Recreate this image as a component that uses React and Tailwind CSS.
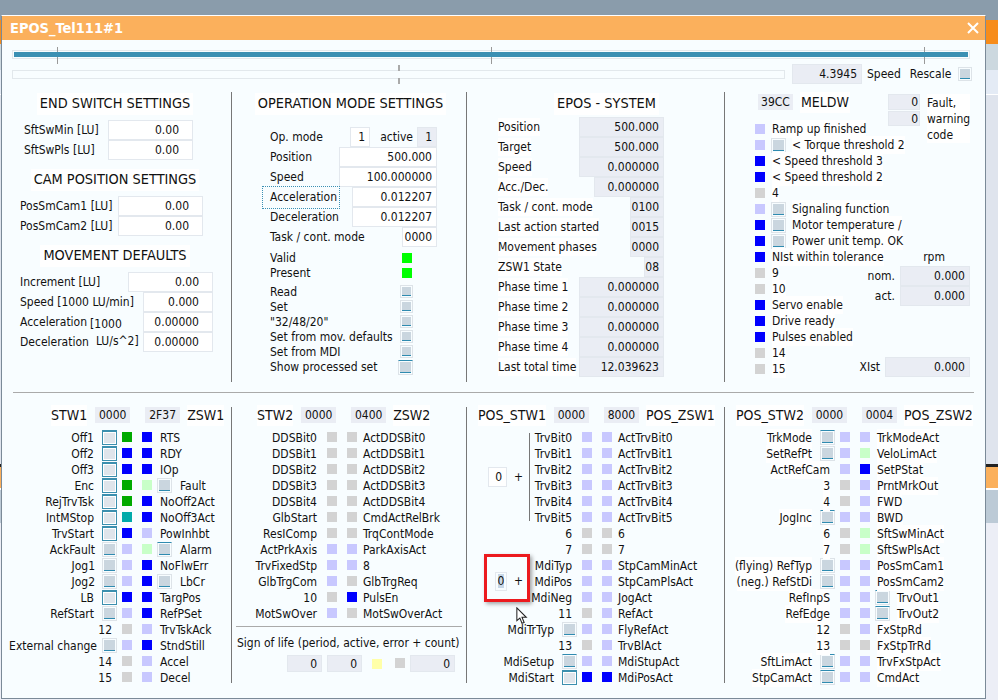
import React from 'react';

const C = {
  b: 'bg-[#0000ff]',
  l: 'bg-[#c8c8ff]',
  g: 'bg-[#d3d3d3]',
  G: 'bg-[#00aa00]',
  T: 'bg-[#00aaaa]',
  L: 'bg-[#c8ffc8]',
  y: 'bg-[#ffffa8]',
};

function Ind({ c, className = '' }) {
  return <div className={`w-[10px] h-[10px] shrink-0 ${C[c]} ${className}`} />;
}

// kind: 'off' | 'top' | 'on'
function Check({ kind = 'off', className = 'w-[15px] h-[15px]' }) {
  if (kind === 'on') {
    return (
      <div className={`shrink-0 border border-t-2 border-[#3b8fae] bg-white p-px ${className}`}>
        <div className="h-full bg-[#dfe5eb]" />
      </div>
    );
  }
  return (
    <div className={`shrink-0 border border-[#dde3e8] p-px ${kind === 'top' ? 'border-t-[#2f8bb0]' : ''} ${className}`}>
      <div className="h-full bg-[#cad6df] border-b border-[#2f8bb0]" />
    </div>
  );
}

function Box({ v, w, gray, pr = 'pr-[4px]', h = 'h-5', className = '' }) {
  return (
    <div className={`${w} ${h} ${pr} shrink-0 border border-[#e3e8ee] flex items-center justify-end ${gray ? 'bg-[#eaedf4]' : 'bg-white'} ${className}`}>
      {v}
    </div>
  );
}

function Hex({ v }) {
  return <div className="w-[35px] h-4 shrink-0 bg-[#eaedf4] flex items-center justify-center">{v}</div>;
}

function Heading({ children, className = '' }) {
  return (
    <div className={`h-[22px] flex items-center justify-center text-[14.4px] ${className}`}>
      <span className="bg-white px-[3px] translate-y-px">{children}</span>
    </div>
  );
}

function Row({ label, children, className = '', labelClass = '' }) {
  return (
    <div className={`h-5 flex items-center ${className}`}>
      <span className={labelClass}>{label}</span>
      {children}
    </div>
  );
}

// row: left label, left check, two lamps, right label, right check, extra classes for the left label
function BitRow({ row, slot, gap = 'ml-[8px]', paper = '' }) {
  const [left, check, a, b, right, rightCheck, tweak] = row;
  return (
    <div className="h-4 flex items-center whitespace-nowrap">
      <div className={`${slot} shrink-0 flex items-center justify-end`}>
        <span className={tweak || (check ? 'mr-[8px]' : 'mr-[5px]')}>
          <span className={`block translate-y-px ${paper}`}>{left}</span>
        </span>
        {check && <Check kind={check} />}
      </div>
      <Ind c={a} className="ml-[5px]" />
      <Ind c={b} className="ml-[10px]" />
      {rightCheck && <Check kind={rightCheck} className="w-[15px] h-[15px] ml-[5px]" />}
      <span className={`${gap} translate-y-px ${paper}`}>{right}</span>
    </div>
  );
}

const stw1 = [
  ['Off1', 'on', 'G', 'b', 'RTS'],
  ['Off2', 'on', 'b', 'b', 'RDY'],
  ['Off3', 'on', 'b', 'b', 'IOp'],
  ['Enc', 'on', 'G', 'L', 'Fault', 'off'],
  ['RejTrvTsk', 'on', 'G', 'b', 'NoOff2Act'],
  ['IntMStop', 'on', 'T', 'b', 'NoOff3Act'],
  ['TrvStart', 'on', 'b', 'l', 'PowInhbt'],
  ['AckFault', 'off', 'l', 'L', 'Alarm', 'top', 'mr-[7px]'],
  ['Jog1', 'off', 'l', 'b', 'NoFlwErr', null, 'mr-[7px]'],
  ['Jog2', 'off', 'l', 'b', 'LbCr', 'off', 'mr-[7px]'],
  ['LB', 'on', 'b', 'b', 'TargPos'],
  ['RefStart', 'off', 'l', 'b', 'RefPSet'],
  ['12', null, 'g', 'l', 'TrvTskAck'],
  ['External change', 'off', 'l', 'b', 'StndStill', null, 'mr-[5px]'],
  ['14', null, 'g', 'l', 'Accel'],
  ['15', null, 'g', 'l', 'Decel'],
];

const stw2 = [
  ['DDSBit0', null, 'g', 'g', 'ActDDSBit0'],
  ['DDSBit1', null, 'g', 'g', 'ActDDSBit1'],
  ['DDSBit2', null, 'g', 'g', 'ActDDSBit2'],
  ['DDSBit3', null, 'g', 'g', 'ActDDSBit3'],
  ['DDSBit4', null, 'g', 'g', 'ActDDSBit4'],
  ['GlbStart', null, 'g', 'g', 'CmdActRelBrk'],
  ['ResIComp', null, 'g', 'g', 'TrqContMode'],
  ['ActPrkAxis', null, 'l', 'l', 'ParkAxisAct'],
  ['TrvFixedStp', null, 'l', 'l', '8'],
  ['GlbTrgCom', null, 'l', 'g', 'GlbTrgReq'],
  ['10', null, 'g', 'b', 'PulsEn'],
  ['MotSwOver', null, 'l', 'g', 'MotSwOverAct'],
];

const posTrv = [0, 1, 2, 3, 4, 5].map((i) => [`TrvBit${i}`, null, 'l', 'l', `ActTrvBit${i}`]);
const posMdi = [
  ['MdiTyp', null, 'l', 'l', 'StpCamMinAct'],
  ['MdiPos', null, 'l', 'l', 'StpCamPlsAct'],
  ['MdiNeg', null, 'l', 'l', 'JogAct'],
];
const posEnd = [
  ['11', null, 'g', 'l', 'RefAct'],
  ['MdiTrTyp', 'off', 'l', 'l', 'FlyRefAct'],
  ['13', null, 'g', 'l', 'TrvBlAct'],
  ['MdiSetup', 'top', 'l', 'l', 'MdiStupAct'],
  ['MdiStart', 'on', 'b', 'b', 'MdiPosAct'],
];

const posStw2 = [
  ['TrkMode', 'top', 'l', 'l', 'TrkModeAct'],
  ['SetRefPt', 'off', 'l', 'L', 'VeloLimAct'],
  ['ActRefCam', null, 'l', 'b', 'SetPStat'],
  ['3', null, 'g', 'l', 'PrntMrkOut'],
  ['4', null, 'g', 'l', 'FWD'],
  ['JogInc', 'top', 'l', 'l', 'BWD'],
  ['6', null, 'g', 'L', 'SftSwMinAct'],
  ['7', null, 'g', 'L', 'SftSwPlsAct'],
  ['(flying) RefTyp', 'off', 'l', 'l', 'PosSmCam1'],
  ['(neg.) RefStDi', 'off', 'l', 'l', 'PosSmCam2'],
  ['RefInpS', null, 'l', 'l', 'TrvOut1', 'top'],
  ['RefEdge', null, 'l', 'l', 'TrvOut2', 'top'],
  ['12', null, 'g', 'l', 'FxStpRd'],
  ['13', null, 'g', 'g', 'FxStpTrRd'],
  ['SftLimAct', 'top', 'l', 'l', 'TrvFxStpAct'],
  ['StpCamAct', 'top', 'l', 'l', 'CmdAct'],
];

const meldw = [
  ['l', 'Ramp up finished'],
  ['l', '< Torque threshold 2', true],
  ['b', '< Speed threshold 3'],
  ['b', '< Speed threshold 2'],
  ['g', '4'],
  ['l', 'Signaling function', true],
  ['b', 'Motor temperature /', true],
  ['b', 'Power unit temp. OK', true],
  ['b', 'NIst within tolerance'],
  ['g', '9'],
  ['g', '10'],
  ['b', 'Servo enable'],
  ['b', 'Drive ready'],
  ['b', 'Pulses enabled'],
  ['g', '14'],
  ['g', '15'],
];

const system = [
  ['Position', '500.000', 'w-[85px]'],
  ['Target', '500.000', 'w-[85px]'],
  ['Speed', '0.000000', 'w-[85px]'],
  ['Acc./Dec.', '0.000000', 'w-[70px]'],
  ['Task / cont. mode', '0100', 'w-[34px]'],
  ['Last action started', '0015', 'w-[34px]'],
  ['Movement phases', '0000', 'w-[34px]'],
  ['ZSW1 State', '08', 'w-[20px]'],
  ['Phase time 1', '0.000000', 'w-[85px]'],
  ['Phase time 2', '0.000000', 'w-[85px]'],
  ['Phase time 3', '0.000000', 'w-[85px]'],
  ['Phase time 4', '0.000000', 'w-[85px]'],
  ['Last total time', '12.039623', 'w-[85px]'],
];

const actions = ['Read', 'Set', '"32/48/20"', 'Set from mov. defaults', 'Set from MDI'];

function EndSwitchColumn() {
  return (
    <div className="w-[230px] shrink-0 border-r border-[#777] pr-[3px]">
      <Heading>END SWITCH SETTINGS</Heading>
      <div className="mt-[6px] ml-[22px] w-[169px]">
        <Row label="SftSwMin [LU]"><Box v="0.00" w="w-[85px]" pr="pr-[13px]" className="ml-auto" /></Row>
        <Row label="SftSwPls [LU]"><Box v="0.00" w="w-[85px]" pr="pr-[13px]" className="ml-auto" /></Row>
      </div>
      <Heading className="mt-[8px]">CAM POSITION SETTINGS</Heading>
      <div className="mt-[6px] ml-[18px] w-[183px]">
        <Row label="PosSmCam1 [LU]"><Box v="0.00" w="w-[85px]" pr="pr-[13px]" className="ml-auto" /></Row>
        <Row label="PosSmCam2 [LU]"><Box v="0.00" w="w-[85px]" pr="pr-[13px]" className="ml-auto" /></Row>
      </div>
      <Heading className="mt-[8px]">MOVEMENT DEFAULTS</Heading>
      <div className="mt-[6px] ml-[18px] w-[193px]">
        <Row label="Increment [LU]"><Box v="0.00" w="w-[85px]" pr="pr-[13px]" className="ml-auto" /></Row>
        <Row label="Speed [1000 LU/min]"><Box v="0.000" w="w-[70px]" pr="pr-[13px]" className="ml-auto" /></Row>
        <Row label="Acceleration">
          <span className="ml-[3px] mt-[4px]">[1000</span>
          <Box v="0.00000" w="w-[70px]" pr="pr-[13px]" className="ml-auto" />
        </Row>
        <Row label="Deceleration">
          <span className="ml-[7px] -mt-[2px]">LU/s^2]</span>
          <Box v="0.00000" w="w-[70px]" pr="pr-[13px]" className="ml-auto" />
        </Row>
      </div>
    </div>
  );
}

function OperationColumn() {
  return (
    <div className="w-[235px] shrink-0 border-r border-[#777]">
      <Heading className="pl-[3px]">OPERATION MODE SETTINGS</Heading>
      <div className="mt-[13px] ml-[38px] w-[167px]">
        <Row label="Op. mode">
          <Box v="1" w="w-[20px]" className="ml-auto" />
          <span className="ml-[10px]">active</span>
          <Box v="1" w="w-[20px]" gray className="ml-[4px]" />
        </Row>
        <Row label="Position"><Box v="500.000" w="w-[98px]" className="ml-auto" /></Row>
        <Row label="Speed"><Box v="100.000000" w="w-[98px]" className="ml-auto" /></Row>
        <div className="h-5 flex items-center">
          <span className="-ml-[8px] pl-[7px] w-[78px] h-[23px] shrink-0 flex items-center border border-dotted border-[#3b90b3]">Acceleration</span>
          <Box v="0.012207" w="w-[85px]" className="ml-auto" />
        </div>
        <Row label="Deceleration"><Box v="0.012207" w="w-[85px]" className="ml-auto" /></Row>
        <Row label="Task / cont. mode"><Box v="0000" w="w-[35px]" className="ml-auto" /></Row>
      </div>
      <div className="mt-[3px] ml-[38px] w-[143px]">
        <div className="h-[15px] flex items-center justify-between pr-px"><span>Valid</span><div className="w-[10px] h-[10px] bg-[#00ff00]" /></div>
        <div className="h-[15px] flex items-center justify-between pr-px"><span>Present</span><div className="w-[10px] h-[10px] bg-[#00ff00]" /></div>
        <div className="h-[4px]" />
        {actions.map((a) => (
          <div key={a} className="h-[15px] flex items-center justify-between whitespace-nowrap">
            <span>{a}</span>
            <Check className="w-[13px] h-[13px]" />
          </div>
        ))}
        <div className="h-[16px] flex items-center justify-between whitespace-nowrap">
          <span>Show processed set</span>
          <Check kind="top" />
        </div>
      </div>
    </div>
  );
}

function SystemColumn() {
  return (
    <div className="w-[258px] shrink-0 border-r border-[#777]">
      <Heading className="pl-[22px]">EPOS - SYSTEM</Heading>
      <div className="mt-[3px] ml-[31px] w-[166px]">
        {system.map(([label, v, w]) => (
          <Row key={label} label={label} labelClass="bg-white"><Box v={v} w={w} gray className="ml-auto" /></Row>
        ))}
      </div>
    </div>
  );
}

function MeldwColumn() {
  return (
    <div className="flex-1 flex pl-[30px] pt-[2px]">
      <div className="w-[100px] shrink-0 whitespace-nowrap">
        <div className="h-4 flex items-center pl-[3px]">
          <Hex v="39CC" />
          <span className="ml-[7px] text-[14px] bg-white px-px">MELDW</span>
        </div>
        <div className="mt-[11px]">
          {meldw.map(([c, label, check], i) => (
            <div key={i} className="h-4 flex items-center">
              <Ind c={c} />
              {check ? (
                <>
                  <Check className="w-[15px] h-[15px] ml-[6px]" />
                  <span className="ml-[6px] bg-white">{label}</span>
                </>
              ) : (
                <span className="ml-[7px] bg-white">{label}</span>
              )}
            </div>
          ))}
        </div>
      </div>
      <div className="w-[115px] shrink-0 flex flex-col items-end">
        <div className="h-[48px] w-[115px] flex pl-[33px] whitespace-nowrap">
          <div className="flex flex-col gap-px">
            <Box v="0" w="w-[32px]" h="h-4" gray pr="pr-[1px]" />
            <Box v="0" w="w-[32px]" h="h-[15px]" gray pr="pr-[1px]" />
          </div>
          <div className="ml-[7px] pt-px leading-[16px] bg-white self-start">Fault,<br />warning<br />code</div>
        </div>
        <div className="mt-[107px] h-4 flex items-center pr-[25px]">rpm</div>
        <div className="mt-px flex items-center gap-[5px]"><span>nom.</span><Box v="0.000" w="w-[70px]" gray /></div>
        <div className="flex items-center gap-[5px]"><span>act.</span><Box v="0.000" w="w-[70px]" gray /></div>
        <div className="mt-[51px] flex items-center gap-[5px]"><span>XIst</span><Box v="0.000" w="w-[85px]" gray /></div>
      </div>
    </div>
  );
}

function BitHeader({ a, b, x, y, className = '' }) {
  return (
    <div className={`h-4 flex items-center text-[14px] whitespace-nowrap ${className}`}>
      <span className="bg-white">{a}</span>
      <div className="ml-[8px] text-[12px]"><Hex v={x} /></div>
      <div className="ml-[15px] text-[12px]"><Hex v={y} /></div>
      <span className="ml-[7px] bg-white">{b}</span>
    </div>
  );
}

function Stw1Column() {
  return (
    <div className="w-[230px] shrink-0 border-r border-[#777]">
      <BitHeader a="STW1" b="ZSW1" x="0000" y="2F37" className="pl-[49px]" />
      <div className="mt-[6px]">
        {stw1.map((r) => <BitRow key={r[0]} row={r} slot="w-[115px]" />)}
      </div>
    </div>
  );
}

function Stw2Column() {
  return (
    <div className="w-[235px] shrink-0 border-r border-[#777]">
      <BitHeader a="STW2" b="ZSW2" x="0000" y="0400" className="pl-[25px]" />
      <div className="mt-[6px]">
        {stw2.map((r) => <BitRow key={r[0]} row={r} slot="w-[90px]" gap="ml-[6px]" />)}
      </div>
      <div className="mt-[5px] mx-[4px] h-px bg-[#aaa]" />
      <div className="mt-[8px] pl-[5px] h-4 flex items-center whitespace-nowrap">Sign of life (period, active, error + count)</div>
      <div className="mt-[4px] flex items-center pl-[55px]">
        <Box v="0" w="w-[35px]" h="h-[17px]" gray />
        <Box v="0" w="w-[35px]" h="h-[17px]" gray className="ml-[5px]" />
        <Ind c="y" className="ml-[10px]" />
        <Ind c="g" className="ml-[13px] -mt-[2px]" />
        <Box v="0" w="w-[45px]" h="h-[17px]" gray className="ml-[5px]" />
      </div>
    </div>
  );
}

function PosStw1Column() {
  return (
    <div className="w-[258px] shrink-0 border-r border-[#777]">
      <BitHeader a="POS_STW1" b="POS_ZSW1" x="0000" y="8000" className="pl-[11px]" />
      <div className="mt-[6px]">
        <div className="flex">
          <div className="w-[63px] shrink-0 my-[4px] border-r border-[#777] flex items-center pl-[21px] gap-[7px]">
            <Box v="0" w="w-[19px]" pr="pr-[4px]" />
            <span>+</span>
          </div>
          <div>{posTrv.map((r) => <BitRow key={r[0]} row={r} slot="w-[47px]" gap="ml-[6px]" />)}</div>
        </div>
        <BitRow row={['6', null, 'g', 'g', '6']} slot="w-[110px]" gap="ml-[6px]" />
        <BitRow row={['7', null, 'g', 'g', '7']} slot="w-[110px]" gap="ml-[6px]" />
        <div className="flex relative">
          <div className="w-[63px] shrink-0 flex items-center pl-[28px] gap-[7px]">
            <div className="w-[12px] h-[19px] shrink-0 border border-[#e3e8ee] flex items-center justify-center">
              <span className="bg-[#c7d7e7] leading-[14px]">0</span>
            </div>
            <span>+</span>
          </div>
          <div>{posMdi.map((r) => <BitRow key={r[0]} row={r} slot="w-[47px]" gap="ml-[6px]" />)}</div>
          <div className="absolute left-[17px] -top-[3px] w-[46px] h-[48px] border-[3px] border-[#ec1a1e] shadow-[2px_2px_4px_rgba(0,0,0,0.35)]" />
          <svg className="absolute left-[49px] top-[50px]" width="12" height="18" viewBox="0 0 14 21">
            <path d="M1 1 L1 16 L4.5 13 L7 19 L9.5 18 L7 12 L12 12 Z" fill="#fff" stroke="#222" strokeWidth="1.2" />
          </svg>
        </div>
        {posEnd.map((r) => <BitRow key={r[0]} row={r} slot="w-[110px]" gap="ml-[6px]" />)}
      </div>
    </div>
  );
}

function PosStw2Column() {
  return (
    <div className="flex-1">
      <BitHeader a="POS_STW2" b="POS_ZSW2" x="0000" y="0004" className="pl-[11px]" />
      <div className="mt-[6px]">
        {posStw2.map((r, i) => <BitRow key={i} row={r} slot="w-[110px]" gap="ml-[7px]" paper="bg-white" />)}
      </div>
    </div>
  );
}

function Backdrop() {
  return (
    <div className="w-full h-full flex flex-col bg-[#eceef6]">
      <div className="h-[20px] bg-[#8a9cab]" />
      <div className="h-[24px] bg-[#f78c1a]" />
      <div className="h-[26px] bg-[#ccd8df]" />
      <div className="h-[24px] bg-[#e4ebf5]" />
      <div className="h-px bg-white" />
      <div className="h-[369px] bg-[#dfe4ed]" />
      <div className="h-[3px] bg-[#222]" />
      <div className="h-[21px] bg-[#fbb05c]" />
      <div className="h-[2px] bg-white" />
      <div className="h-[33px] bg-[#bccad6]" />
    </div>
  );
}

export default function App() {
  return (
    <div className="relative w-[998px] h-[700px] overflow-hidden text-[12px] text-[#111] font-['DejaVu_Sans_Condensed','DejaVu_Sans',sans-serif]">
      <Backdrop />
      <div className="absolute left-[1px] top-[15px] w-[985px] h-[684px] bg-[#f8fdff] border border-[#7b8a98] border-t-white flex flex-col">
        <div className="h-[24px] shrink-0 bg-[#fbb05c] flex items-center justify-between pl-[8px] pr-[6px] text-white text-[14.5px] font-bold">
          <span className="translate-y-px">EPOS_Tel111#1</span>
          <svg width="12" height="12" viewBox="0 0 12 12">
            <path d="M1 1 L11 11 M11 1 L1 11" stroke="#fff" strokeWidth="2" />
          </svg>
        </div>

        <div className="relative mt-[10px] ml-[10px] w-[958px] h-[9px] border border-[#e2e8ec] p-px">
          <div className="relative z-10 h-full bg-[#3b90b3]" />
          <div className="absolute left-[44px] -top-[4px] w-px h-[17px] bg-[#999]" />
          <div className="absolute left-[478px] -top-[4px] w-px h-[17px] bg-[#999]" />
          <div className="absolute left-[911px] -top-[4px] w-px h-[17px] bg-[#999]" />
        </div>

        <div className="mt-[5px] h-5 flex items-center pl-[10px]">
          <div className="relative w-[773px] h-[9px] border border-[#e2e8ec]">
            <div className="absolute left-[385px] -top-[6px] w-[2px] h-[6px] bg-[#aaa]" />
            <div className="absolute left-[385px] top-[7px] w-[2px] h-[6px] bg-[#aaa]" />
          </div>
          <Box v="4.3945" w="w-[70px]" gray className="ml-[7px]" />
          <span className="ml-[5px]">Speed</span>
          <span className="ml-[9px]">Rescale</span>
          <Check className="w-[14px] h-[14px] ml-[7px]" />
        </div>

        <div className="mt-[8px] h-[290px] shrink-0 flex">
          <EndSwitchColumn />
          <OperationColumn />
          <SystemColumn />
          <MeldwColumn />
        </div>

        <div className="mt-[10px] mx-[11px] h-px shrink-0 bg-[#aaa]" />

        <div className="mt-[14px] h-[276px] shrink-0 flex">
          <Stw1Column />
          <Stw2Column />
          <PosStw1Column />
          <PosStw2Column />
        </div>
      </div>
    </div>
  );
}
